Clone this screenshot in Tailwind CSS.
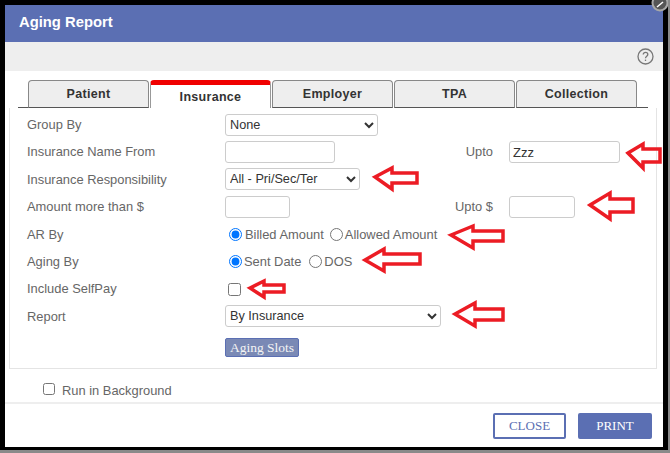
<!DOCTYPE html>
<html lang="en">
<head>
  <meta charset="UTF-8" />
  <title>Aging Report</title>
  <script src="https://cdn.jsdelivr.net/npm/@tailwindcss/browser@4"></script>
</head>
<body class="bg-[#8a8a8a] w-[670px] h-[453px] overflow-hidden font-['Liberation_Sans',Arial,sans-serif] text-[12.9px] text-[#666]">

  <div class="relative w-[668px] h-[450px] bg-black pl-[5px] pr-[5px] pt-[5px] pb-[3px]">

    <div class="h-full bg-white flex flex-col">
      <!-- Header -->
      <div class="h-[37px] bg-[#5b6fb3] text-white font-bold text-[14.8px] pl-[14px] pb-[2px] flex items-center">Aging Report</div>

      <!-- Help bar -->
      <div class="h-[29px] bg-[#eeeeee] flex items-center justify-end pr-[9px]">
        <svg width="17" height="17" viewBox="0 0 17 17" fill="none" stroke="#777" stroke-width="1.3">
          <circle cx="8.5" cy="8.5" r="7.5" />
          <path d="M6.2 6.6c0-1.4 1-2.2 2.3-2.2s2.3.8 2.3 2c0 1.8-2.3 1.8-2.3 3.8" />
          <path d="M8.5 11.6v1.4" />
        </svg>
      </div>

      <!-- Tabs -->
      <div class="flex items-end h-[37px] pl-[13px] text-[12.5px] font-bold text-[#333] tracking-[0.3px]">
        <div class="w-[10px] h-px bg-[#555]"></div>
        <div class="w-[121px] h-[28px] bg-[#eeeeee] border border-[#888] border-b-[#555] rounded-t-[4px] flex items-center justify-center">Patient</div>
        <div class="w-[121px] h-[28px] ml-px pt-[2px] bg-white border-t-[5px] border-t-[#f00000] border-x border-x-[#999] rounded-t-[4px] flex items-center justify-center">Insurance</div>
        <div class="w-[121px] h-[28px] ml-px bg-[#eeeeee] border border-[#888] border-b-[#555] rounded-t-[4px] flex items-center justify-center">Employer</div>
        <div class="w-[121px] h-[28px] ml-px bg-[#eeeeee] border border-[#888] border-b-[#555] rounded-t-[4px] flex items-center justify-center">TPA</div>
        <div class="w-[121px] h-[28px] ml-px bg-[#eeeeee] border border-[#888] border-b-[#555] rounded-t-[4px] flex items-center justify-center">Collection</div>
        <div class="w-[11px] h-px bg-[#555]"></div>
      </div>

      <!-- Form panel -->
      <div class="ml-[4px] mr-[6px] h-[261px] border border-t-0 border-[#e4e4e4] pl-[17px] pt-[3px]">
        <div class="grid grid-cols-[198px_1fr] auto-rows-[27.4px] items-center">
          <span>Group By</span>
          <select class="w-[153px] h-[22px] border border-[#ccc] rounded-[3px] bg-white text-[12.7px] text-[#333]"><option>None</option></select>

          <span>Insurance Name From</span>
          <div class="flex items-center">
            <input class="w-[110px] h-[22px] border border-[#ccc] rounded-[3px]" />
            <span class="w-[174px] text-right pr-[16px]">Upto</span>
            <input value="Zzz" class="w-[111px] h-[22px] border border-[#ccc] rounded-[3px] text-[13px] text-[#333] pl-[3px]" />
          </div>

          <span>Insurance Responsibility</span>
          <select class="w-[135px] h-[22px] border border-[#ccc] rounded-[3px] bg-white text-[12.7px] text-[#333]"><option>All - Pri/Sec/Ter</option></select>

          <span>Amount more than $</span>
          <div class="flex items-center">
            <input class="w-[65px] h-[22px] border border-[#ccc] rounded-[3px]" />
            <span class="w-[219px] text-right pr-[16px]">Upto $</span>
            <input class="w-[66px] h-[22px] border border-[#ccc] rounded-[3px]" />
          </div>

          <span>AR By</span>
          <div class="flex items-center pl-[4px]">
            <input type="radio" name="ar" checked class="w-[13px] h-[13px] m-0 accent-[#0075ff]" />
            <span class="ml-[3px]">Billed Amount</span>
            <input type="radio" name="ar" class="w-[13px] h-[13px] ml-[6px] m-0" />
            <span class="ml-[2px]">Allowed Amount</span>
          </div>

          <span>Aging By</span>
          <div class="flex items-center pl-[4px]">
            <input type="radio" name="aging" checked class="w-[13px] h-[13px] m-0 accent-[#0075ff]" />
            <span class="ml-[2px]">Sent Date</span>
            <input type="radio" name="aging" class="w-[13px] h-[13px] ml-[8px] m-0" />
            <span class="ml-[2px]">DOS</span>
          </div>

          <span>Include SelfPay</span>
          <div class="pl-[3px] flex items-center"><input type="checkbox" class="w-[13px] h-[13px] m-0" /></div>

          <span>Report</span>
          <select class="w-[216px] h-[22px] border border-[#ccc] rounded-[3px] bg-white text-[12.7px] text-[#333]"><option>By Insurance</option></select>

          <span></span>
          <div class="flex items-center">
            <button class="w-[74px] h-[19px] mt-[8px] bg-[#7a89b5] border border-[#5b6fb3] rounded-[2px] text-[#f4f4f4] font-['Liberation_Serif',serif] text-[13.5px] leading-none">Aging Slots</button>
          </div>
        </div>
      </div>

      <!-- Background option -->
      <div class="h-[35px] flex items-center pl-[38px] pt-[10px] border-b-2 border-[#eeeeee]">
        <input type="checkbox" class="w-[12px] h-[12px] m-0 mb-[3px]" />
        <span class="ml-[7px]">Run in Background</span>
      </div>

      <!-- Footer -->
      <div class="flex-1 flex justify-end items-start gap-[12px] pt-[9px] pr-[11px] font-['Liberation_Serif',serif] text-[13px]">
        <button class="w-[73px] h-[26px] border-2 border-[#5b6fb3] rounded-[2px] text-[#5b6fb3] bg-white">CLOSE</button>
        <button class="w-[74px] h-[26px] bg-[#5b6fb3] rounded-[2px] text-white">PRINT</button>
      </div>
    </div>

    <!-- close button, cut off by the frame -->
    <svg class="absolute left-[650px] top-0" width="18" height="16" fill="none">
      <circle cx="10" cy="3" r="7.5" fill="#555" stroke="#a8a8a8" stroke-width="2" />
      <path d="M7 7l6-5" stroke="#fff" stroke-width="1.5" />
    </svg>

    <!-- Red annotation arrows -->
    <svg class="absolute left-0 top-0 pointer-events-none" width="670" height="453" fill="none" stroke="#ec1c24" stroke-width="3.5">
      <path d="M628 153l15-9v5h17v13h-17v6z" />
      <path d="M375 177l17-9v5h25v10h-25v6z" />
      <path d="M590 205l20-12v6h23v13h-23v7z" />
      <path d="M451 235l22-9v5h30v10h-30v7z" />
      <path d="M365 260l19-11v5h36v10h-36v7z" />
      <path d="M250 288l14-7v4h20v7h-20v5z" />
      <path d="M455 314l20-11v6h28v11h-28v6z" />
    </svg>
  </div>
</body>
</html>
